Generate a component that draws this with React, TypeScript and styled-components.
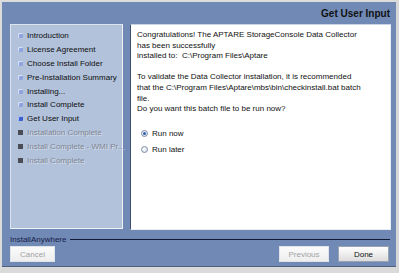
import React from "react";
import styled, { createGlobalStyle } from "styled-components";

const Global = createGlobalStyle`
  html, body { margin: 0; padding: 0; background: #d9d9d9; }
  body { font-family: "Liberation Sans", Arial, sans-serif; }
  * { box-sizing: border-box; }
`;

const Window = styled.div`
  width: 399px;
  height: 273px;
  border-top: 2px solid #dcdcdc;
  border-left: 2px solid #dcdcdc;
  border-right: 3px solid #d6d6d6;
  border-bottom: 6px solid #dadada;
  background: #7089b5;
  display: flex;
  flex-direction: column;
  box-shadow: inset 0 -1px 0 #4f5f7c;
`;

const Header = styled.div`
  height: 22px;
  display: flex;
  align-items: center;
  justify-content: flex-end;
  padding: 1px 6px 0 0;
  font-weight: bold;
  font-size: 10px;
  color: #111;
`;

const Body = styled.div`
  height: 206px;
  display: flex;
  gap: 7px;
  padding: 0 5px 0 8px;
`;

const Nav = styled.div`
  width: 113px;
  height: 205px;
  background: #b2c2db;
  border: 1px solid #dbe3ef;
  border-right-color: #eef2f8;
  border-bottom-color: #eef2f8;
  padding-top: 4px;
  display: flex;
  flex-direction: column;
`;

type StepState = "done" | "current" | "todo";

const Step = styled.div<{ $state: StepState }>`
  height: 13.8px;
  display: flex;
  align-items: center;
  gap: 4px;
  padding-left: 7px;
  font-size: 8px;
  white-space: nowrap;
  color: ${(p) => (p.$state === "todo" ? "#7f8793" : "#0d0d0d")};
  text-shadow: ${(p) => (p.$state === "todo" ? "1px 1px 0 #d3dcea" : "none")};
`;

const StepIcon = styled.span<{ $state: StepState }>`
  width: 5px;
  height: 5px;
  flex: none;
  border-radius: ${(p) => (p.$state === "todo" ? "0" : "1px")};
  background: ${(p) =>
    p.$state === "todo"
      ? "#4a4d55"
      : p.$state === "current"
      ? "#3c5fd0"
      : "#8fa4df"};
  box-shadow: ${(p) =>
    p.$state === "todo"
      ? "none"
      : p.$state === "current"
      ? "inset 1px 1px 0 #a9bcf4"
      : "inset 1px 1px 0 #d6e0fa"};
`;

const Content = styled.div`
  width: 261px;
  height: 206px;
  background: #ffffff;
  border: 1px solid #c8d3e6;
  border-left-color: #3d4f70;
  border-right-color: #e9eef6;
  border-bottom-color: #e9eef6;
  padding: 5px 6px 0 6px;
  font-size: 8px;
  color: #111;
`;

const Para = styled.p`
  margin: 0 0 10.6px 0;
  line-height: 10.6px;
  white-space: pre;
`;

const RadioGroup = styled.div`
  margin-top: 10px;
  padding-left: 4px;
  display: flex;
  flex-direction: column;
`;

const RadioRow = styled.label`
  height: 16px;
  display: flex;
  align-items: center;
  gap: 4px;
  font-size: 8px;
  color: #111;
`;

const RadioDot = styled.span<{ $checked: boolean }>`
  width: 7px;
  height: 7px;
  border-radius: 50%;
  border: 1px solid #7d8ea8;
  background: radial-gradient(circle at 40% 35%, #ffffff, #cfd7e2);
  display: flex;
  align-items: center;
  justify-content: center;
  &::after {
    content: "";
    width: 3px;
    height: 3px;
    border-radius: 50%;
    background: ${(p) => (p.$checked ? "#2f5cb0" : "transparent")};
  }
`;

const Footer = styled.div`
  flex: 1;
  display: flex;
  flex-direction: column;
  padding: 3px 7px 5px 8px;
`;

const Brand = styled.div`
  height: 12px;
  display: flex;
  align-items: center;
  gap: 4px;
  font-size: 8px;
  color: #17204a;
`;

const BrandLine = styled.span`
  flex: 1;
  height: 1px;
  background: #121a36;
  margin-right: -1px;
`;

const Buttons = styled.div`
  margin-top: 1px;
  display: flex;
  gap: 9px;
`;

const Button = styled.button<{ $w: number; $disabled?: boolean }>`
  width: ${(p) => p.$w}px;
  height: 16px;
  padding: 0;
  font-family: "Liberation Sans", Arial, sans-serif;
  font-size: 8px;
  color: ${(p) => (p.$disabled ? "#a3a3a3" : "#111")};
  border: 1px solid ${(p) => (p.$disabled ? "#dfe3ea" : "#9aa3b2")};
  background: ${(p) =>
    p.$disabled
      ? "linear-gradient(#fbfbfb, #eeeeee)"
      : "linear-gradient(#ffffff, #dcdcdc)"};
`;

const Spacer = styled.div`
  flex: 1;
`;

const steps: { label: string; state: StepState }[] = [
  { label: "Introduction", state: "done" },
  { label: "License Agreement", state: "done" },
  { label: "Choose Install Folder", state: "done" },
  { label: "Pre-Installation Summary", state: "done" },
  { label: "Installing...", state: "done" },
  { label: "Install Complete", state: "done" },
  { label: "Get User Input", state: "current" },
  { label: "Installation Complete", state: "todo" },
  { label: "Install Complete - WMI Pr...", state: "todo" },
  { label: "Install Complete", state: "todo" },
];

export default function App() {
  return (
    <>
      <Global />
      <Window>
        <Header>Get User Input</Header>
        <Body>
          <Nav>
            {steps.map((s, i) => (
              <Step key={i} $state={s.state}>
                <StepIcon $state={s.state} />
                {s.label}
              </Step>
            ))}
          </Nav>
          <Content>
            <Para>
              {"Congratulations! The APTARE StorageConsole Data Collector\nhas been successfully\ninstalled to:  C:\\Program Files\\Aptare"}
            </Para>
            <Para>
              {"To validate the Data Collector installation, it is recommended\nthat the C:\\Program Files\\Aptare\\mbs\\bin\\checkinstall.bat batch\nfile.\nDo you want this batch file to be run now?"}
            </Para>
            <RadioGroup>
              <RadioRow>
                <RadioDot $checked={true} />
                Run now
              </RadioRow>
              <RadioRow>
                <RadioDot $checked={false} />
                Run later
              </RadioRow>
            </RadioGroup>
          </Content>
        </Body>
        <Footer>
          <Brand>
            InstallAnywhere
            <BrandLine />
          </Brand>
          <Buttons>
            <Button $w={45} $disabled>Cancel</Button>
            <Spacer />
            <Button $w={50} $disabled>Previous</Button>
            <Button $w={51}>Done</Button>
          </Buttons>
        </Footer>
      </Window>
    </>
  );
}
